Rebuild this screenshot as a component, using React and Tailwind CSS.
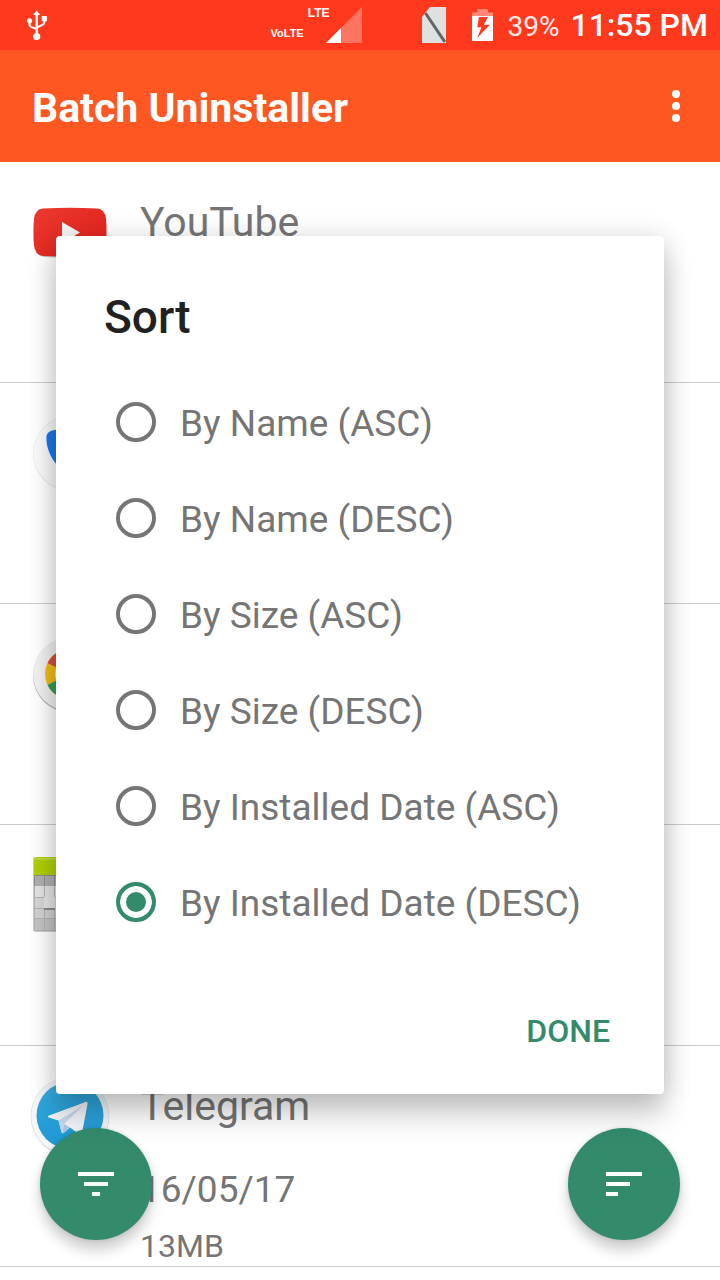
import { useState } from "react";

const SORT_OPTIONS = [
  "By Name (ASC)",
  "By Name (DESC)",
  "By Size (ASC)",
  "By Size (DESC)",
  "By Installed Date (ASC)",
  "By Installed Date (DESC)",
];

function UsbIcon() {
  return (
    <svg className="h-[30px] w-5" viewBox="0 0 20 30" fill="none" role="img" aria-label="USB connected">
      <path d="M9.7 3v22" stroke="#fff" strokeWidth="2.4" />
      <path d="M9.700 0.500l3.600 4.500H6.100z" fill="#fff" />
      <path d="M2.5 11v3.6c0 1.2.6 1.8 1.6 2.2l5.6 2.4M17.3 9v3.4c0 1.2-.6 1.8-1.6 2.3l-6 3" stroke="#fff" strokeWidth="2" />
      <circle cx="2.6" cy="10.8" r="2.6" fill="#fff" />
      <rect x="14.7" y="6" width="5.2" height="5.2" fill="#fff" />
      <circle cx="9.7" cy="26.5" r="3.6" fill="#fff" />
    </svg>
  );
}

function SignalIcon() {
  return (
    <svg className="-ml-[3px] h-9 w-9" viewBox="0 0 36 36" role="img" aria-label="Signal strength">
      <path d="M36 0v36H0z" fill="#fff" fillOpacity=".3" />
      <path d="M15 21v15H0z" fill="#fff" />
    </svg>
  );
}

function NoSimIcon() {
  return (
    <svg className="h-9 w-6" viewBox="0 0 24 36" role="img" aria-label="No SIM">
      <path d="M8 0h16v36H0V10z" fill="#e0e0e0" />
      <path d="M3.4 6L22.8 35" stroke="#5f6668" strokeWidth="3" />
    </svg>
  );
}

function BatteryIcon() {
  return (
    <svg className="h-8 w-[21px]" viewBox="0 0 21 32" role="img" aria-label="Battery charging">
      <path d="M5.3 0h10.5v3.4H21V7H0V3.4h5.3z" fill="#fff" fillOpacity=".4" />
      <path
        fillRule="evenodd"
        d="M0 7h21v25H0zM7 8L5.2 18.3h4.2L5.2 29 17.8 15.7h-6L16 8z"
        fill="#fff"
      />
    </svg>
  );
}

function StatusBar() {
  return (
    <header className="flex h-[50px] shrink-0 items-center bg-[#ff391d] pr-3 pl-[27px] text-white">
      <UsbIcon />
      <div className="ml-auto flex items-center font-['Liberation_Sans',sans-serif] leading-4 font-bold">
        <span className="mt-4 text-[11px]">VoLTE</span>
        <span className="mb-6 ml-1 text-[12px]">LTE</span>
        <SignalIcon />
      </div>
      <div className="ml-[60px] flex items-center gap-[26px]">
        <NoSimIcon />
        <BatteryIcon />
      </div>
      <div className="ml-3.5 flex items-baseline gap-[11px] pt-0.5 leading-8">
        <span className="text-[28px] text-white/90">39%</span>
        <span className="text-[32px] font-medium">11:55 PM</span>
      </div>
    </header>
  );
}

function YouTubeIcon() {
  return (
    <svg className="size-20" viewBox="0 0 80 80" role="img" aria-label="YouTube icon">
      <defs>
        <linearGradient id="yt" x1="0" y1="0" x2="1" y2="1">
          <stop offset="0" stopColor="#ea3a30" />
          <stop offset="1" stopColor="#e21f1a" />
        </linearGradient>
      </defs>
      <path d="M14 18Q40 16 67 18Q75 19 76 29Q77 41 76 54Q75 64 67 65Q40 67 14 65Q5 64 4 54Q3 41 4 29Q5 19 14 18z" fill="#000" fillOpacity=".2" />
      <path d="M13 16.500Q40 15 67 16.500Q75 17 76 27Q77 40 76 53Q75 63 67 64Q40 65 13 64Q5 63 4 53Q3 40 4 27Q5 17 13 16.500z" fill="url(#yt)" />
      <path d="M32 30l18 10.500L32 51z" fill="#f5f5f5" />
    </svg>
  );
}

function PhoneIcon() {
  return (
    <svg className="size-20" viewBox="0 0 80 80" role="img" aria-label="Phone icon">
      <circle cx="40" cy="41" r="37" fill="#000" fillOpacity=".08" />
      <circle cx="40" cy="40" r="37" fill="#efefef" />
      <circle cx="40" cy="40.300" r="36.400" fill="#fafafa" />
      <path d="M16.500 23q1-5 8-6 6-1 7 5l2 9c1 4-3 4-4 8 3 8 8 13 14 15 3-1 4-5 8-4l8 2q5 2 4 8-2 7-8 7C34 66 15 44 16.500 23z" fill="#1a78ee" />
    </svg>
  );
}

function ChromeIcon() {
  return (
    <svg className="size-20" viewBox="0 0 80 80" role="img" aria-label="Chrome icon">
      <circle cx="40" cy="41.500" r="37" fill="#000" fillOpacity=".3" />
      <circle cx="40" cy="40" r="37" fill="#f1f1f1" />
      <circle cx="40" cy="40" r="25" fill="#f2bd16" />
      <path d="M40 40L17.500 29A25 25 0 0 1 62.500 29z" fill="#dd4b3e" />
      <path d="M40 40L17.500 51A25 25 0 0 0 45 64.500z" fill="#2fa053" />
      <circle cx="40" cy="40" r="15" fill="#f1f1f1" />
      <circle cx="40" cy="40" r="11" fill="#4285f4" />
    </svg>
  );
}

function CalendarIcon() {
  return (
    <svg className="size-20" viewBox="0 3 80 80" role="img" aria-label="Calendar icon">
      <rect x="3" y="5" width="74" height="75" rx="2" fill="#000" fillOpacity=".2" />
      <rect x="4" y="6" width="72" height="73" rx="2" fill="#b4b4b4" />
      <path d="M4 8q0-3 3-3h66q3 0 3 3v15H4z" fill="#b0d000" />
      <path d="M4 6h72v1.500H4z" fill="#c2e040" />
      <path d="M4 23h72v11H4z" fill="#8f8f8f" />
      <path d="M5 24h9v10H5zM15 24h9v10h-9zM25 24h50v10H25z" fill="#b0b0b0" />
      <path d="M5 34h9v11H5zM15 34h9v11h-9zM25 34h50v11H25z" fill="#e4e4e4" />
      <path d="M5 46h9v10H5z" fill="#d6d6d6" />
      <path d="M5 57h9v9H5zM15 58h9v8h-9zM25 46h50v20H25z" fill="#d2d2d2" />
      <path d="M5 67h9v11H5zM15 67h9v11h-9zM25 67h50v11H25z" fill="#c4c4c4" />
      <path d="M14 45h11v13H14z" fill="#8c8c8c" />
      <path d="M14 45h11v11H14z" fill="#e6e6e6" />
    </svg>
  );
}

function TelegramIcon() {
  return (
    <svg className="size-20" viewBox="0 0 80 80" role="img" aria-label="Telegram icon">
      <defs>
        <linearGradient id="tg" x1="0" y1="0" x2="0" y2="1">
          <stop offset="0" stopColor="#37aee2" />
          <stop offset="1" stopColor="#1e96d4" />
        </linearGradient>
      </defs>
      <circle cx="40" cy="40.500" r="39.500" fill="#e2e2e2" />
      <circle cx="40" cy="40" r="38.700" fill="#f4f6f7" />
      <circle cx="40" cy="39.500" r="33.500" fill="url(#tg)" />
      <path d="M18.500 39.800L55.500 26q2.500-.8 2 2L52 57q-.7 2.500-3 1L40 51.500l-6.500 5.500q-1.500 1-2-1l-3-11.500-9.800-3q-1.800-.8-.2-1.700z" fill="#f1f5f8" />
      <path d="M28.500 44.500L52 30.500 34 48l-1.300 9q-.8 0-1.200-1z" fill="#c5d8ea" />
      <path d="M34 48L40 51.500l-6.500 5.500q-.5.300-.8 0z" fill="#aac6df" />
    </svg>
  );
}

const APPS = [
  { id: "youtube", Icon: YouTubeIcon, name: "YouTube" },
  { id: "phone", Icon: PhoneIcon },
  { id: "chrome", Icon: ChromeIcon },
  { id: "calendar", Icon: CalendarIcon },
  { id: "telegram", Icon: TelegramIcon, name: "Telegram", date: "16/05/17", size: "13MB" },
];

function AppRow({ Icon, name, date, size }) {
  return (
    <li className="flex min-h-[221px] gap-[30px] border-b border-[#cbcbcb] pt-[30px] pl-[30px] text-[#757575]">
      <Icon />
      <div>
        <p className="text-[41px] leading-[60px]">{name}</p>
        <p className="mt-7 text-[37px] leading-[52px]">{date}</p>
        <p className="mt-2.5 text-[32px] leading-10">{size}</p>
      </div>
    </li>
  );
}

function SortDialog() {
  const [selected, setSelected] = useState("By Installed Date (DESC)");
  return (
    <div className="absolute inset-x-0 top-[50px] bottom-0 flex items-center px-14">
      <form
        role="dialog"
        aria-labelledby="sort-title"
        onSubmit={(e) => e.preventDefault()}
        className="flex w-full flex-col rounded bg-white pt-12 pb-[27px] shadow-[0_24px_28px_rgba(0,0,0,0.15),0_4px_28px_rgba(0,0,0,0.2)]"
      >
        <h2 id="sort-title" className="mb-6 px-12 text-[46px] leading-[66px] font-medium text-[#212121]">
          Sort
        </h2>
        {SORT_OPTIONS.map((option) => (
          <label key={option} className="flex h-24 items-center gap-6 px-[60px] text-[37px] leading-[44px] text-[#757575]">
            <input
              type="radio"
              name="sort"
              value={option}
              checked={selected === option}
              onChange={() => setSelected(option)}
              className="size-10 shrink-0 appearance-none rounded-full border-4 border-[#757575] bg-white checked:border-[#338b6c] checked:bg-[#338b6c] checked:shadow-[inset_0_0_0_6px_#fff]"
            />
            <span className="pt-1 whitespace-nowrap">{option}</span>
          </label>
        ))}
        <button
          type="submit"
          className="mt-[45px] mr-[38px] h-[72px] self-end px-4 text-[32px] leading-10 font-medium text-[#338b6c]"
        >
          DONE
        </button>
      </form>
    </div>
  );
}

const FAB_CLASS =
  "absolute bottom-10 flex size-28 items-center justify-center rounded-full bg-[#338b6c] shadow-[0_10px_14px_rgba(0,0,0,0.2),0_0_4px_rgba(0,0,0,0.12)]";

export default function App() {
  return (
    <div className="relative flex h-screen flex-col overflow-hidden bg-white font-[Roboto,sans-serif]">
      <StatusBar />
      <nav className="flex h-28 shrink-0 items-center justify-between bg-[#ff5722] pr-5 pl-8 text-white">
        <h1 className="pt-1 text-[41px] leading-[56px] font-bold">Batch Uninstaller</h1>
        <button type="button" aria-label="More options" className="flex size-12 items-center justify-center">
          <svg className="h-8 w-2" viewBox="0 0 8 32" fill="#fff">
            <circle cx="4" cy="4" r="4" />
            <circle cx="4" cy="16" r="4" />
            <circle cx="4" cy="28" r="4" />
          </svg>
        </button>
      </nav>
      <main className="min-h-0 flex-1 overflow-hidden">
        <ul>
          {APPS.map(({ id, ...app }) => (
            <AppRow key={id} {...app} />
          ))}
        </ul>
      </main>
      <button type="button" aria-label="Filter" className={`${FAB_CLASS} left-10`}>
        <svg className="h-6 w-9" viewBox="0 0 36 24" fill="#fff">
          <path d="M0 0h36v4H0zM6 10h24v4H6zM14 20h8v4h-8z" />
        </svg>
      </button>
      <button type="button" aria-label="Sort" className={`${FAB_CLASS} right-10`}>
        <svg className="h-6 w-9" viewBox="0 0 36 24" fill="#fff">
          <path d="M0 0h36v4H0zM0 10h24v4H0zM0 20h12v4H0z" />
        </svg>
      </button>
      <SortDialog />
    </div>
  );
}
